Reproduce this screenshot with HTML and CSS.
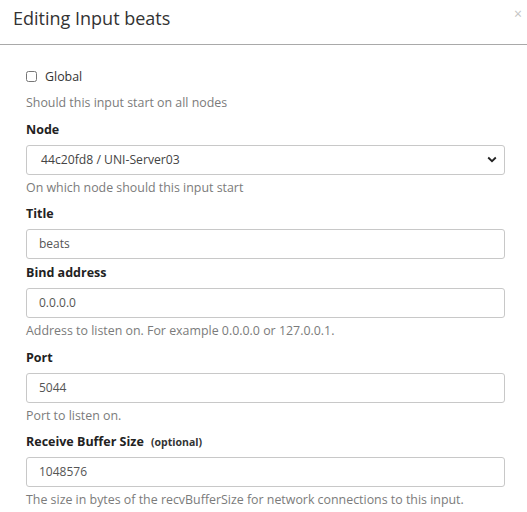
FILE: index.html
```html
<!DOCTYPE html>
<html>
<head>
<meta charset="utf-8">
<link rel="stylesheet" href="styles.css">
</head>
<body>
<div class="modal">
  <div class="modal-header">
    <h4 class="modal-title">Editing Input beats</h4>
    <span class="close">×</span>
  </div>
  <div class="modal-body">
    <div class="group">
      <label class="check-label"><input type="checkbox" class="check"> Global</label>
      <p class="help help-check">Should this input start on all nodes</p>
    </div>

    <div class="group">
      <label class="label">Node</label>
      <div class="select">
        <span>44c20fd8 / UNI-Server03</span>
        <svg class="chev" width="10" height="7" viewBox="0 0 10 7"><path d="M1.2 1.5 L5 5.2 L8.8 1.5" fill="none" stroke="#222" stroke-width="1.8"/></svg>
      </div>
      <p class="help">On which node should this input start</p>
    </div>

    <div class="group">
      <label class="label">Title</label>
      <div class="input">beats</div>
    </div>

    <div class="group">
      <label class="label">Bind address</label>
      <div class="input">0.0.0.0</div>
      <p class="help">Address to listen on. For example 0.0.0.0 or 127.0.0.1.</p>
    </div>

    <div class="group">
      <label class="label">Port</label>
      <div class="input">5044</div>
      <p class="help">Port to listen on.</p>
    </div>

    <div class="group">
      <label class="label">Receive Buffer Size <span class="optional">(optional)</span></label>
      <div class="input">1048576</div>
      <p class="help">The size in bytes of the recvBufferSize for network connections to this input.</p>
    </div>
  </div>
</div>
</body>
</html>
```
FILE: styles.css
```css
* { box-sizing: border-box; }
html, body { margin: 0; padding: 0; background: #fff; }
body { font-family: "Open Sans", "Noto Sans", sans-serif; color: #333; }
.modal { width: 527px; }
.modal-header {
  position: relative;
  height: 45px;
  border-bottom: 1px solid #a9a9a9;
  padding: 6px 13px 0;
}
.modal-title {
  margin: 0;
  font-size: 18px;
  font-weight: 400;
  line-height: 25px;
  color: #333;
}
.close {
  position: absolute;
  right: 5px;
  top: 6px;
  font-size: 14px;
  line-height: 16px;
  color: #c4c4c4;
}
.modal-body {
  padding: 23px 22px 0 26px;
  display: flex;
  flex-direction: column;
  gap: 5px;
}
.group { display: flex; flex-direction: column; }
.check-label {
  display: flex;
  align-items: center;
  height: 17px;
  font-size: 12.4px;
  line-height: 17px;
  color: #333;
}
.check { margin: 0 8px 0 0; width: 11px; height: 11px; }
.help {
  margin: 4px 0 4.5px;
  font-size: 12.4px;
  line-height: 17px;
  color: #7b7b7b;
}
.help-check { margin-top: 9px; }
.label {
  display: block;
  font-size: 12.5px;
  font-weight: 700;
  line-height: 18px;
  color: #222;
  margin-bottom: 6px;
}
.optional { font-size: 10.5px; margin-left: 4px; color: #333; }
.input, .select {
  height: 30px;
  border: 1px solid #c8c8c8;
  border-radius: 3px;
  padding: 0 12px;
  font-size: 12px;
  line-height: 28px;
  color: #555;
}
.select {
  display: flex;
  justify-content: space-between;
  align-items: center;
  padding: 0 7px 0 14px;
  font-size: 12.2px;
  color: #444;
}
.chev { display: block; }
```
